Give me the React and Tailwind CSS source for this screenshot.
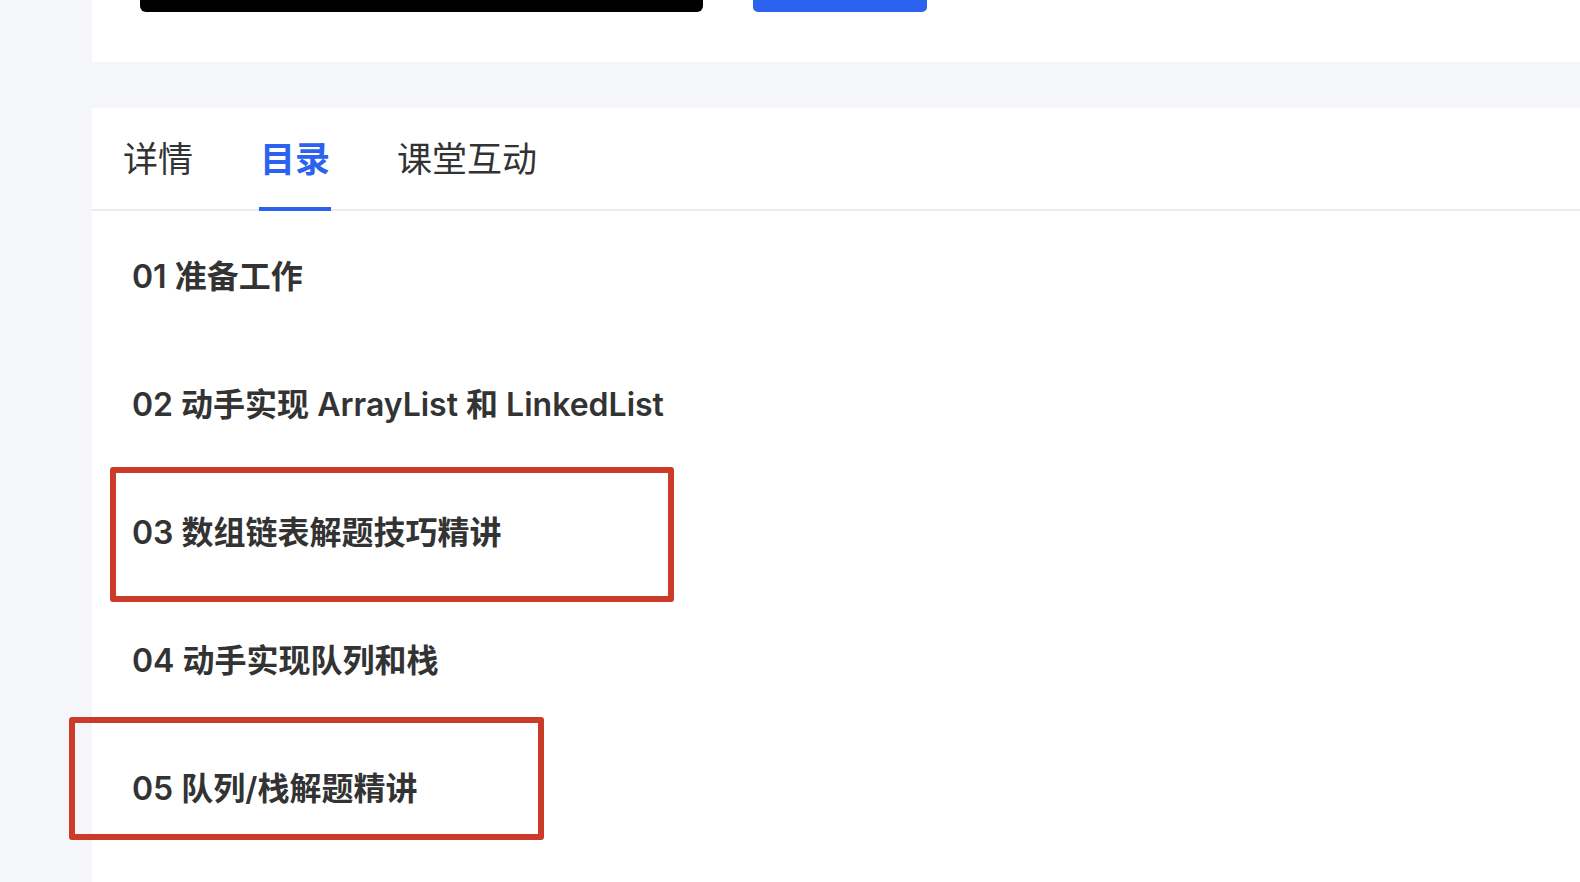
import { useState } from "react";

const tabs = ["详情", "目录", "课堂互动"];

const chapters = [
  "01 准备工作",
  "02 动手实现 ArrayList 和 LinkedList",
  "03 数组链表解题技巧精讲",
  "04 动手实现队列和栈",
  "05 队列/栈解题精讲",
];

export default function App() {
  const [active, setActive] = useState(1);

  return (
    <div
      className="relative min-h-screen bg-[#f5f6fa] pl-[92px] overflow-hidden"
      style={{ fontFamily: '"Noto Sans CJK SC", "Noto Sans", sans-serif' }}
    >
      {/* top card, scrolled mostly out of view */}
      <div className="h-[62px] bg-white flex items-start">
        <div className="ml-[48px] w-[563px] h-[12px] bg-black rounded-b-[6px]" />
        <div className="ml-[50px] w-[174px] h-[12px] bg-[#2b62f0] rounded-b-[5px]" />
      </div>

      <div className="mt-[46px] bg-white min-h-[800px]">
        <div className="flex gap-[66px] pl-[31px] border-b-2 border-[#ebebeb]">
          {tabs.map((t, i) => (
            <button
              key={t}
              onClick={() => setActive(i)}
              className={`h-[103px] -mb-[2px] flex items-center pb-[3px] text-[35px] leading-none ${
                i === active
                  ? "border-b-4 border-[#2b62f0] text-[#2b62f0] font-bold px-[1px]"
                  : "border-b-4 border-transparent text-[#333333]"
              }`}
            >
              {t}
            </button>
          ))}
        </div>

        <div
          className="pl-[40px]"
          style={{ fontFamily: 'Inter, "Noto Sans CJK SC", sans-serif' }}
        >
          {chapters.map((c) => (
            <div
              key={c}
              className="h-[128px] pt-[4px] flex items-center text-[32px] font-semibold text-[#333333]"
            >
              {c}
            </div>
          ))}
        </div>
      </div>

      {/* red annotation boxes */}
      <div className="absolute left-[110px] top-[467px] w-[564px] h-[135px] border-[6px] border-[#cc3a29] rounded-[3px]" />
      <div className="absolute left-[69px] top-[717px] w-[475px] h-[123px] border-[6px] border-[#cc3a29] rounded-[3px]" />
    </div>
  );
}
